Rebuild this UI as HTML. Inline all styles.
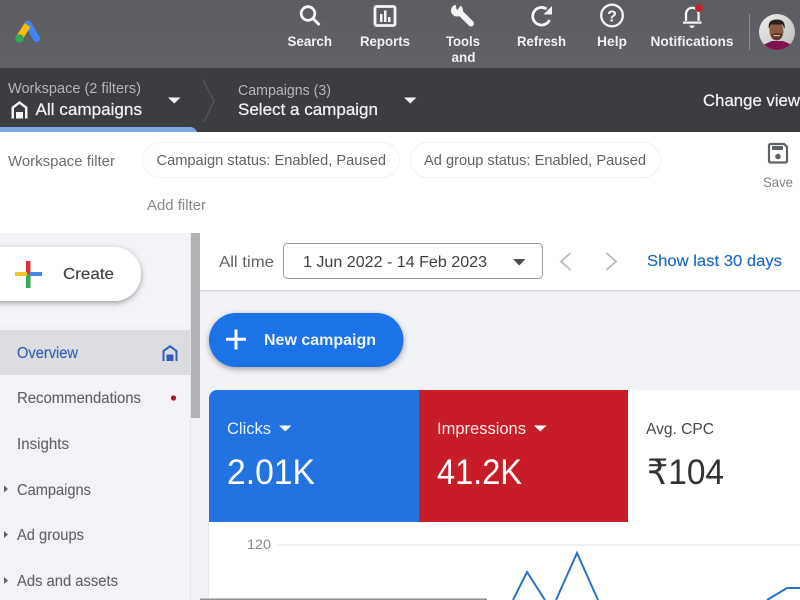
<!DOCTYPE html>
<html><head><meta charset="utf-8"><style>
html,body{margin:0;padding:0;width:800px;height:600px;overflow:hidden;background:#f1f2f6}
svg{display:block;font-family:"Liberation Sans",sans-serif;filter:blur(.3px)}
text{white-space:pre}
.n{font-weight:700;fill:#f1f1f3;font-size:14px}
.s{fill:#5f6368;font-size:16px;stroke:#5f6368;stroke-width:.1}
</style></head><body>
<svg width="800" height="600" viewBox="0 0 800 600" xmlns="http://www.w3.org/2000/svg">
<defs>
<filter id="sh" x="-20%" y="-30%" width="140%" height="170%"><feDropShadow dx="0" dy="2" stdDeviation="3" flood-color="#000" flood-opacity=".35"/></filter>
<clipPath id="av"><circle cx="777" cy="32" r="18"/></clipPath>
<linearGradient id="tb" x1="0" y1="0" x2="0" y2="1"><stop offset="0" stop-color="#5c5d63"/><stop offset="1" stop-color="#616268"/></linearGradient>
<linearGradient id="avb" x1="0" y1="0" x2="1" y2="1"><stop offset="0" stop-color="#f0f0ef"/><stop offset="1" stop-color="#b9b9b9"/></linearGradient>
</defs>
<!-- bars -->
<rect width="800" height="68" fill="url(#tb)"/>
<rect y="68" width="800" height="64" fill="#3c3d41"/>
<path d="M0 127H190Q195 127 197 132H0Z" fill="#7da7e3"/>
<path d="M203 80L214 101L204 122" fill="none" stroke="#55565b" stroke-width="1.2"/>
<rect y="132" width="800" height="101" fill="#fff"/>
<!-- logo -->
<path d="M28 24L36.500 38.500" stroke="#4285f4" stroke-width="7" stroke-linecap="round"/>
<path d="M27.500 25L20 37" stroke="#fbbc04" stroke-width="7"/>
<circle cx="19.500" cy="38.500" r="4.300" fill="#34a853"/>
<!-- search icon -->
<g fill="none" stroke="#f4f4f5" stroke-width="2.800">
<circle cx="308" cy="13.500" r="6.800"/><path d="M313 18.500L319.500 25"/>
<!-- reports -->
<rect x="375" y="6.500" width="20" height="19" rx="1.500"/>
</g>
<path d="M380 14h2.500v8H380zM384 10.500h2.500V22H384zM388 17h2.500v5H388z" fill="#f4f4f5"/>
<!-- wrench -->
<path d="M458 10.500L471 23.500" stroke="#f4f4f5" stroke-width="6" stroke-linecap="round"/>
<circle cx="457" cy="10.500" r="6" fill="#f4f4f5"/>
<path d="M457 10.500L455 3L462 3.500Z" fill="#5d5e64"/>
<!-- refresh -->
<g fill="none" stroke="#f4f4f5" stroke-width="2.800">
<path d="M549.500 20A8.800 8.800 0 1 1 546.500 9"/>
</g>
<path d="M543.500 14.500h8.500V6Z" fill="#f4f4f5"/>
<!-- help -->
<circle cx="612" cy="15.500" r="10.800" fill="none" stroke="#f4f4f5" stroke-width="2.300"/>
<text x="612" y="21.500" text-anchor="middle" font-size="16" font-weight="700" fill="#f4f4f5">?</text>
<!-- bell -->
<path d="M686 21V14a6.300 6.300 0 0 1 12.600 0V21" fill="none" stroke="#f4f4f5" stroke-width="2.300"/>
<path d="M683 21.500h18.500v2.300H683z" fill="#f4f4f5"/>
<path d="M689.500 25.500h5a2.500 2.500 0 0 1-5 0z" fill="#f4f4f5"/>
<circle cx="699" cy="8" r="4" fill="#c5222f"/>
<rect x="749" y="14" width="1" height="36" fill="#8b8c90"/>
<!-- avatar -->
<g clip-path="url(#av)">
<rect x="759" y="14" width="36" height="36" fill="url(#avb)"/>
<path d="M760 50L765 44L772 41H783L790 44L795 50Z" fill="#7d1450"/>
<ellipse cx="776.500" cy="31" rx="7" ry="9.500" fill="#8d5b42"/>
<path d="M769 29Q767 19.500 777 19.500Q786 19.500 784.500 29L782.500 24.500H771Z" fill="#2a1f1e"/>
<path d="M771 34Q777 32 782.500 34Q782 40 777 40Q772 40 771 34Z" fill="#5b3a2c"/>
<rect x="773.500" y="35" width="6.500" height="1.200" fill="#c9b3a6"/>
</g>
<!-- nav labels -->
<text class="n" x="287.500" y="46" textLength="44.500" lengthAdjust="spacingAndGlyphs">Search</text>
<text class="n" x="360" y="46" textLength="50" lengthAdjust="spacingAndGlyphs">Reports</text>
<text class="n" x="446" y="46" textLength="34" lengthAdjust="spacingAndGlyphs">Tools</text>
<text class="n" x="451.500" y="62" textLength="24" lengthAdjust="spacingAndGlyphs">and</text>
<text class="n" x="517" y="46" textLength="49" lengthAdjust="spacingAndGlyphs">Refresh</text>
<text class="n" x="597" y="46" textLength="30" lengthAdjust="spacingAndGlyphs">Help</text>
<text class="n" x="650.500" y="46" textLength="83" lengthAdjust="spacingAndGlyphs">Notifications</text>
<!-- second bar -->
<text x="8" y="93" font-size="15" fill="#b4b5b9" textLength="133" lengthAdjust="spacingAndGlyphs">Workspace (2 filters)</text>
<path d="M19.500 101L11.500 107V118.500H27.500V107Z" fill="#f4f4f4"/>
<path d="M19.500 104L14 108.200V118.500H25V108.200Z" fill="#3c3d41"/>
<rect x="16" y="112" width="7" height="6.500" fill="#f4f4f4"/>
<text x="35.500" y="115" font-size="17" fill="#f1f1f1" stroke="#f1f1f1" stroke-width=".25" textLength="106.500" lengthAdjust="spacingAndGlyphs">All campaigns</text>
<path d="M168 97.500H180.500L174.250 103.500Z" fill="#f4f4f4"/>
<text x="238" y="95" font-size="15" fill="#b4b5b9" textLength="93" lengthAdjust="spacingAndGlyphs">Campaigns (3)</text>
<text x="238" y="115" font-size="17" fill="#f1f1f1" stroke="#f1f1f1" stroke-width=".25" textLength="140" lengthAdjust="spacingAndGlyphs">Select a campaign</text>
<path d="M404 97.500H416.500L410.250 103.500Z" fill="#f4f4f4"/>
<text x="703" y="106" font-size="17" fill="#f1f1f1" stroke="#f1f1f1" stroke-width=".25" textLength="97" lengthAdjust="spacingAndGlyphs">Change view</text>
<!-- filter row -->
<text x="8" y="166" font-size="15" fill="#6b6e72" textLength="107" lengthAdjust="spacingAndGlyphs">Workspace filter</text>
<rect x="142.500" y="142.500" width="257" height="35" rx="17.500" fill="#fff" stroke="#f1f1f4"/>
<text x="156.500" y="165" font-size="15" fill="#5f6368" textLength="229.500" lengthAdjust="spacingAndGlyphs">Campaign status: Enabled, Paused</text>
<rect x="410.500" y="142.500" width="250" height="35" rx="17.500" fill="#fff" stroke="#f1f1f4"/>
<text x="424" y="165" font-size="15" fill="#5f6368" textLength="222" lengthAdjust="spacingAndGlyphs">Ad group status: Enabled, Paused</text>
<text x="147" y="210" font-size="15" fill="#85888c" textLength="59" lengthAdjust="spacingAndGlyphs">Add filter</text>
<path d="M769 145.500a1.500 1.500 0 0 1 1.500-1.500H784l3 3v14a1.500 1.500 0 0 1-1.500 1.500h-15a1.500 1.500 0 0 1-1.500-1.500Z" fill="none" stroke="#5f6368" stroke-width="2.200"/>
<rect x="772" y="146" width="11" height="4" fill="#5f6368"/>
<circle cx="778" cy="156.500" r="2.800" fill="#5f6368"/>
<text x="763" y="187" font-size="14" fill="#80848a" textLength="30" lengthAdjust="spacingAndGlyphs">Save</text>
<!-- sidebar -->
<rect y="233" width="190" height="367" fill="#f2f2f7"/>
<rect x="0" y="321" width="190" height="1.500" fill="#f8f8fb"/>
<rect x="-30" y="247" width="171" height="54" rx="27" fill="#fff" filter="url(#sh)"/>
<rect x="26" y="261" width="4.500" height="13" fill="#d93036"/>
<rect x="26" y="274" width="4.500" height="14" fill="#34a853"/>
<rect x="15" y="272" width="12" height="4" fill="#f2c230"/>
<rect x="30" y="272" width="12" height="4" fill="#4a86e8"/>
<text x="63" y="279" font-size="16" fill="#3f4246" stroke="#3f4246" stroke-width=".15" textLength="51" lengthAdjust="spacingAndGlyphs">Create</text>
<rect y="330" width="190" height="45" fill="#dcdde1"/>
<text x="17" y="358" font-size="15.500" fill="#3560b5" stroke="#3560b5" stroke-width=".15" textLength="61" lengthAdjust="spacingAndGlyphs">Overview</text>
<path d="M170 345L162.500 350.500V361H177.500V350.500Z" fill="#2f5fb3"/>
<path d="M170 347.500L164.500 351.500V361H175.500V351.500Z" fill="#dcdde1"/>
<rect x="166.500" y="354.500" width="7" height="6.500" fill="#2f5fb3"/>
<text class="s" x="17" y="403" textLength="124" lengthAdjust="spacingAndGlyphs">Recommendations</text>
<circle cx="173.500" cy="398" r="2.600" fill="#b3112c"/>
<text class="s" x="17" y="449" textLength="52" lengthAdjust="spacingAndGlyphs">Insights</text>
<text class="s" x="17" y="495" textLength="74" lengthAdjust="spacingAndGlyphs">Campaigns</text>
<text class="s" x="17" y="540" textLength="67" lengthAdjust="spacingAndGlyphs">Ad groups</text>
<text class="s" x="17" y="586" textLength="101" lengthAdjust="spacingAndGlyphs">Ads and assets</text>
<path d="M4 485.500L8 489L4 492.500ZM4 531L8 534.500L4 538ZM4 577L8 580.500L4 584Z" fill="#5f6368"/>
<rect x="190" y="233" width="1" height="367" fill="#e6e6ea"/>
<rect x="191" y="233" width="9" height="185" fill="#b2b2b5"/>
<!-- date bar -->
<rect x="200" y="233" width="600" height="57" fill="#fff"/>
<rect x="200" y="290" width="600" height="1.500" fill="#d6d7db"/>
<text x="219" y="267" font-size="16" fill="#5f6368" textLength="55" lengthAdjust="spacingAndGlyphs">All time</text>
<rect x="283.500" y="243.500" width="259" height="35" rx="4" fill="#fff" stroke="#9b9ca0"/>
<text x="303" y="267" font-size="16" fill="#3c4043" textLength="184" lengthAdjust="spacingAndGlyphs">1 Jun 2022 - 14 Feb 2023</text>
<path d="M513 259H525.500L519.250 265.500Z" fill="#4a4c50"/>
<path d="M570.500 253L561 261.500L570.500 270M606.500 253L616 261.500L606.500 270" fill="none" stroke="#b8babe" stroke-width="1.800"/>
<text x="647" y="266" font-size="16" fill="#1a68c8" stroke="#1a68c8" stroke-width=".15" textLength="135" lengthAdjust="spacingAndGlyphs">Show last 30 days</text>
<!-- new campaign -->
<rect x="209" y="313" width="194.500" height="54" rx="27" fill="#1a73e8" filter="url(#sh)"/>
<path d="M226 337.700H246V340.700H226ZM234.500 329.500H237.500V349.500H234.500Z" fill="#fff"/>
<text x="264" y="345" font-size="16" font-weight="700" fill="#eef4fd" textLength="112" lengthAdjust="spacingAndGlyphs">New campaign</text>
<!-- cards -->
<path d="M209 522V398a8 8 0 0 1 8-8H419V522Z" fill="#2272e2"/>
<rect x="419" y="390" width="209" height="132" fill="#c71d26"/>
<rect x="628" y="390" width="172" height="132" fill="#fff"/>
<text x="227" y="434" font-size="16.500" fill="#e8f1fd" textLength="44" lengthAdjust="spacingAndGlyphs">Clicks</text>
<path d="M279 425.500H291.500L285.250 431.500Z" fill="#fff"/>
<text x="227" y="484" font-size="35" fill="#fff" textLength="88" lengthAdjust="spacingAndGlyphs">2.01K</text>
<text x="437" y="434" font-size="16.500" fill="#fbe9ea" textLength="89" lengthAdjust="spacingAndGlyphs">Impressions</text>
<path d="M534 425.500H546.500L540.250 431.500Z" fill="#fff"/>
<text x="437" y="484" font-size="35" fill="#fff" textLength="85" lengthAdjust="spacingAndGlyphs">41.2K</text>
<text x="646" y="434" font-size="16" fill="#45484c" textLength="68" lengthAdjust="spacingAndGlyphs">Avg. CPC</text>
<text x="647" y="484" font-size="35" fill="#303236" textLength="77" lengthAdjust="spacingAndGlyphs">₹104</text>
<!-- chart -->
<rect x="209" y="522" width="591" height="78" fill="#fff"/>
<rect x="208" y="522" width="1" height="78" fill="#e8e8ec"/>
<text x="247" y="549" font-size="14" fill="#85888c" textLength="24" lengthAdjust="spacingAndGlyphs">120</text>
<rect x="277" y="544.500" width="523" height="1.200" fill="#e4e5e7"/>
<path d="M513 600L527 572L545 600M556 600L577 553L598 600M767 600L787 588H800" fill="none" stroke="#2a72c4" stroke-width="2"/>
<rect x="200" y="598.500" width="287" height="1.500" fill="#8d8e91"/>
</svg>
</body></html>
